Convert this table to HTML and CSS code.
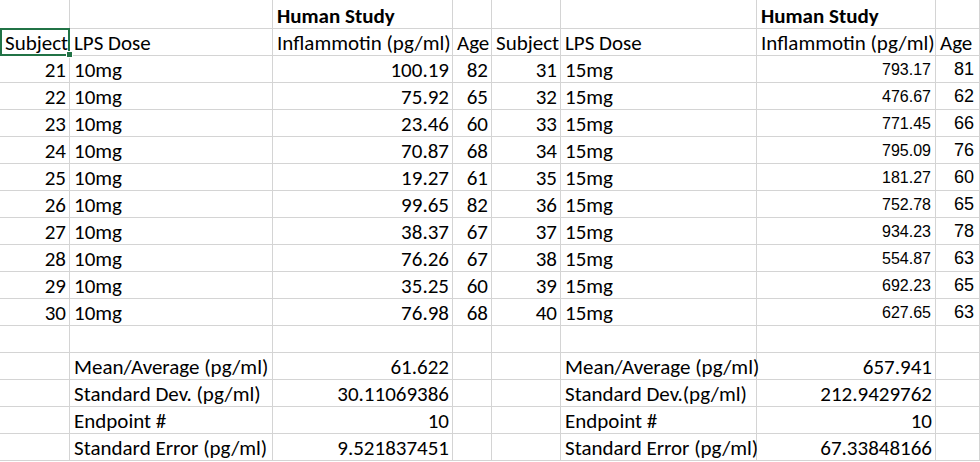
FILE: index.html
```html
<!DOCTYPE html>
<html lang="en">
<head>
<meta charset="utf-8">
<title>Human Study</title>
<link rel="stylesheet" href="styles.css">
</head>
<body>
<div class="sheet">
  <!-- row 1 -->
  <div class="c"></div><div class="c"></div><div class="c b">Human Study</div><div class="c"></div>
  <div class="c"></div><div class="c"></div><div class="c b">Human Study</div><div class="c"></div>
  <!-- row 2 -->
  <div class="c sel first">Subject<span class="handle"></span></div><div class="c">LPS Dose</div><div class="c">Inflammotin (pg/ml)</div><div class="c">Age</div>
  <div class="c">Subject</div><div class="c">LPS Dose</div><div class="c">Inflammotin (pg/ml)</div><div class="c">Age</div>
  <!-- data -->
  <div class="c r">21</div><div class="c">10mg</div><div class="c r">100.19</div><div class="c r">82</div><div class="c r">31</div><div class="c">15mg</div><div class="c r val">793.17</div><div class="c r age">81</div>
  <div class="c r">22</div><div class="c">10mg</div><div class="c r">75.92</div><div class="c r">65</div><div class="c r">32</div><div class="c">15mg</div><div class="c r val">476.67</div><div class="c r age">62</div>
  <div class="c r">23</div><div class="c">10mg</div><div class="c r">23.46</div><div class="c r">60</div><div class="c r">33</div><div class="c">15mg</div><div class="c r val">771.45</div><div class="c r age">66</div>
  <div class="c r">24</div><div class="c">10mg</div><div class="c r">70.87</div><div class="c r">68</div><div class="c r">34</div><div class="c">15mg</div><div class="c r val">795.09</div><div class="c r age">76</div>
  <div class="c r">25</div><div class="c">10mg</div><div class="c r">19.27</div><div class="c r">61</div><div class="c r">35</div><div class="c">15mg</div><div class="c r val">181.27</div><div class="c r age">60</div>
  <div class="c r">26</div><div class="c">10mg</div><div class="c r">99.65</div><div class="c r">82</div><div class="c r">36</div><div class="c">15mg</div><div class="c r val">752.78</div><div class="c r age">65</div>
  <div class="c r">27</div><div class="c">10mg</div><div class="c r">38.37</div><div class="c r">67</div><div class="c r">37</div><div class="c">15mg</div><div class="c r val">934.23</div><div class="c r age">78</div>
  <div class="c r">28</div><div class="c">10mg</div><div class="c r">76.26</div><div class="c r">67</div><div class="c r">38</div><div class="c">15mg</div><div class="c r val">554.87</div><div class="c r age">63</div>
  <div class="c r">29</div><div class="c">10mg</div><div class="c r">35.25</div><div class="c r">60</div><div class="c r">39</div><div class="c">15mg</div><div class="c r val">692.23</div><div class="c r age">65</div>
  <div class="c r">30</div><div class="c">10mg</div><div class="c r">76.98</div><div class="c r">68</div><div class="c r">40</div><div class="c">15mg</div><div class="c r val">627.65</div><div class="c r age">63</div>
  <!-- empty row -->
  <div class="c"></div><div class="c"></div><div class="c"></div><div class="c"></div><div class="c"></div><div class="c"></div><div class="c"></div><div class="c"></div>
  <!-- stats -->
  <div class="c"></div><div class="c">Mean/Average (pg/ml)</div><div class="c r">61.622</div><div class="c"></div><div class="c"></div><div class="c">Mean/Average (pg/ml)</div><div class="c r">657.941</div><div class="c"></div>
  <div class="c"></div><div class="c">Standard Dev. (pg/ml)</div><div class="c r">30.11069386</div><div class="c"></div><div class="c"></div><div class="c">Standard Dev.(pg/ml)</div><div class="c r">212.9429762</div><div class="c"></div>
  <div class="c"></div><div class="c">Endpoint #</div><div class="c r">10</div><div class="c"></div><div class="c"></div><div class="c">Endpoint #</div><div class="c r">10</div><div class="c"></div>
  <div class="c"></div><div class="c">Standard Error (pg/ml)</div><div class="c r">9.521837451</div><div class="c"></div><div class="c"></div><div class="c">Standard Error (pg/ml)</div><div class="c r">67.33848166</div><div class="c"></div>
</div>
</body>
</html>
```

FILE: styles.css
```css
html, body {
  margin: 0;
  padding: 0;
  background: #ffffff;
  overflow: hidden;
  height: 462px;
}

.sheet {
  display: grid;
  grid-template-columns: 70px 203px 180px 39px 69px 196px 179px 44px;
  grid-template-rows: 29px repeat(16, 27px);
  width: 980px;
  font-family: "Carlito", "Lato", "Liberation Sans", sans-serif;
  font-size: 21px;
  color: #000000;
}

.c {
  box-sizing: border-box;
  border-right: 1px solid #d4d4d4;
  border-bottom: 1px solid #d4d4d4;
  display: flex;
  align-items: flex-end;
  justify-content: flex-start;
  padding: 0 3px 1px 4px;
  line-height: 1;
  white-space: nowrap;
  overflow: visible;
  position: relative;
}

.r {
  justify-content: flex-end;
}

.b {
  font-weight: 700;
}

.first {
  padding-left: 5px;
}

.val {
  font-family: "Liberation Sans", Arial, sans-serif;
  font-size: 16px;
  padding-right: 4px;
  padding-bottom: 4px;
}

.age {
  font-family: "Liberation Sans", Arial, sans-serif;
  font-size: 18px;
  padding-right: 5px;
  padding-bottom: 4px;
}

.sel::after {
  content: "";
  position: absolute;
  top: -1px;
  left: 0;
  right: -1px;
  bottom: -1px;
  border: 2px solid #217346;
  z-index: 2;
  pointer-events: none;
}

.handle {
  position: absolute;
  left: 67px;
  top: 23px;
  width: 5px;
  height: 5px;
  background: #217346;
  box-shadow: 0 0 0 1px #ffffff;
  z-index: 3;
}
```
